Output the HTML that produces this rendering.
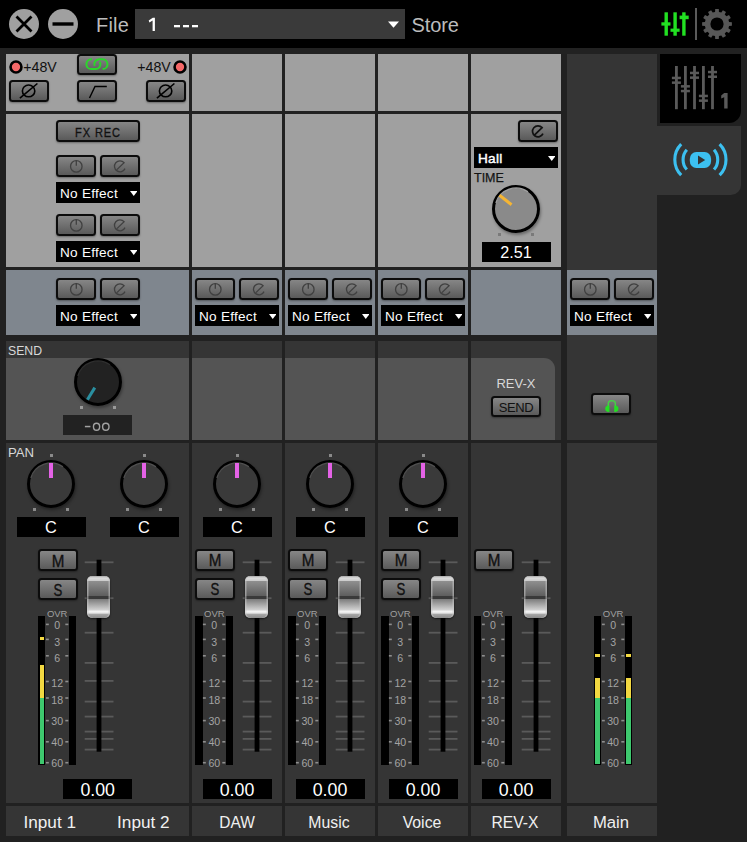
<!DOCTYPE html><html><head><meta charset="utf-8"><style>
html,body{margin:0;padding:0}
body{width:747px;height:842px;position:relative;overflow:hidden;background:#212121;font-family:"Liberation Sans", sans-serif}
.t{position:absolute;line-height:1;white-space:nowrap}
.btn{position:absolute;box-sizing:border-box;border:2px solid #0c0c0c;border-radius:3.5px;background:linear-gradient(#868686,#5a5a5a);box-shadow:0 1px 2px rgba(0,0,0,.35)}
.dd{position:absolute;background:#000}
.ddt{position:absolute;left:4px;top:4.6px;font-size:13.6px;letter-spacing:0.25px;line-height:1;color:#fff;white-space:nowrap}
svg{display:block}
.cap{position:absolute;width:23px;height:42px;border-radius:5px;background:linear-gradient(#a8a8a8 0px,#dcdcdc 2px,#cdcdcd 4.5px,#8e8e8e 5.5px,#5e5e5e 20px,#3a3a3a 20.2px,#3a3a3a 22.6px,#7a7a7a 22.8px,#d2d2d2 34px,#f4f4f4 35.2px,#e6e6e6 37px,#a4a4a4 38.5px,#8a8a8a 42px);box-shadow:inset 1.5px 0 0 rgba(200,200,200,.55),inset -1.5px 0 0 rgba(200,200,200,.55),0 1px 2px rgba(0,0,0,.6)}

</style></head><body>
<div style="position:absolute;left:0px;top:0px;width:747px;height:48px;background:#000;"></div>
<svg width="90" height="48" style="position:absolute;left:0;top:0"><circle cx="24" cy="24" r="15" fill="#a0a0a0"/><path d="M16.5 16.5 L31.5 31.5 M31.5 16.5 L16.5 31.5" stroke="#000" stroke-width="2.8"/><circle cx="63" cy="24" r="15" fill="#a0a0a0"/><rect x="52.5" y="22.3" width="21" height="3.4" fill="#000"/></svg>
<div class="t" style="left:96px;top:15px;font-size:20px;color:#bcbcbc;letter-spacing:0.2px">File</div>
<div style="position:absolute;left:135px;top:9px;width:270px;height:30px;background:#3a3a3a;"></div>
<svg width="747" height="48" style="position:absolute;left:0;top:0"><path d="M154.9 17.8 L154.9 31 L152.6 31 L152.6 20.6 L149.4 22.4 L148.7 20.6 L152.8 17.8 Z" fill="#fff"/></svg>
<svg width="30" height="4" style="position:absolute;left:174px;top:24.8px"><g fill="#fff"><rect x="0" y="0" width="6" height="2.3"/><rect x="9" y="0" width="6" height="2.3"/><rect x="18" y="0" width="6" height="2.3"/></g></svg>
<svg width="12" height="8" style="position:absolute;left:388px;top:21px"><path d="M0 0.5 L11 0.5 L5.5 6.8 Z" fill="#fff"/></svg>
<div class="t" style="left:411.5px;top:14.6px;font-size:20px;color:#bcbcbc;letter-spacing:-0.1px">Store</div>
<svg width="40" height="48" style="position:absolute;left:655px;top:0">
<g fill="#22e022">
<rect x="9.5" y="12.3" width="3.4" height="23.4"/><rect x="6.4" y="22.3" width="9.1" height="3.3"/>
<rect x="18.4" y="12.3" width="3.4" height="23.4"/><rect x="15.5" y="28.6" width="9.1" height="3.2"/>
<rect x="27.2" y="12.3" width="3.4" height="23.4"/><rect x="24.6" y="15.6" width="9.1" height="3.6"/>
</g></svg>
<div style="position:absolute;left:695px;top:8px;width:2px;height:32px;background:#5a5a5a;"></div>
<svg width="747" height="48" style="position:absolute;left:0;top:0"><polygon points="729.04,22.06 731.89,22.20 731.89,25.80 729.04,25.94 728.40,28.34 730.79,29.89 729.00,33.00 726.46,31.71 724.71,33.46 726.00,36.00 722.89,37.79 721.34,35.40 718.94,36.04 718.80,38.89 715.20,38.89 715.06,36.04 712.66,35.40 711.11,37.79 708.00,36.00 709.29,33.46 707.54,31.71 705.00,33.00 703.21,29.89 705.60,28.34 704.96,25.94 702.11,25.80 702.11,22.20 704.96,22.06 705.60,19.66 703.21,18.11 705.00,15.00 707.54,16.29 709.29,14.54 708.00,12.00 711.11,10.21 712.66,12.60 715.06,11.96 715.20,9.11 718.80,9.11 718.94,11.96 721.34,12.60 722.89,10.21 726.00,12.00 724.71,14.54 726.46,16.29 729.00,15.00 730.79,18.11 728.40,19.66" fill="#575757"/><circle cx="717" cy="24" r="6.6" fill="#000"/></svg>
<div style="position:absolute;left:0px;top:48px;width:747px;height:6px;background:#222222;"></div>
<div style="position:absolute;left:660px;top:54px;width:81px;height:69px;background:#000;border-bottom-right-radius:12px"></div>
<div style="position:absolute;left:657px;top:126px;width:84px;height:69px;background:#353535;border-bottom-right-radius:10px"></div>
<svg width="747" height="120" style="position:absolute;left:0;top:0"><g fill="#5a5a5a"><rect x="675.0" y="66" width="2.8" height="43.2"/><rect x="671.9" y="76.7" width="9" height="2.5"/><rect x="671.9" y="81.4" width="9" height="2.5"/><rect x="684.0" y="66" width="2.8" height="43.2"/><rect x="680.9" y="85.1" width="9" height="2.5"/><rect x="680.9" y="89.8" width="9" height="2.5"/><rect x="693.1" y="66" width="2.8" height="43.2"/><rect x="690.0" y="71.7" width="9" height="2.5"/><rect x="690.0" y="76.4" width="9" height="2.5"/><rect x="702.0" y="66" width="2.8" height="43.2"/><rect x="698.9" y="94.7" width="9" height="2.5"/><rect x="698.9" y="99.4" width="9" height="2.5"/><rect x="711.1" y="66" width="2.8" height="43.2"/><rect x="708.0" y="70.8" width="9" height="2.5"/><rect x="708.0" y="75.5" width="9" height="2.5"/></g></svg><svg width="12" height="20" style="position:absolute;left:718px;top:90px"><path d="M6.2 3 L9.6 3 L9.6 18.5 L6.2 18.5 L6.2 7.2 L3.2 8.6 L3.2 5.6 Z" fill="#5a5a5a"/></svg>
<svg width="747" height="200" style="position:absolute;left:0;top:0">
<g fill="none" stroke="#3cc0f0" stroke-width="3.1" stroke-linecap="butt">
<path d="M681.2 144.2 A22 22 0 0 0 681.2 175.2"/>
<path d="M686.8 149.8 A15 15 0 0 0 686.8 169.6"/>
<path d="M719.6 144.2 A22 22 0 0 1 719.6 175.2"/>
<path d="M714 149.8 A15 15 0 0 1 714 169.6"/>
</g>
<rect x="689.8" y="151.9" width="21.3" height="16.1" rx="6.5" ry="7" fill="#3cc0f0"/>
<path d="M698 155.6 L705.2 160 L698 164.5 Z" fill="#333"/>
</svg>
<div style="position:absolute;left:6px;top:54px;width:183px;height:57px;background:#a0a0a0;"></div>
<div style="position:absolute;left:6px;top:114px;width:183px;height:153px;background:#a0a0a0;"></div>
<div style="position:absolute;left:6px;top:270px;width:183px;height:65px;background:#7f868e;"></div>
<div style="position:absolute;left:6px;top:341px;width:183px;height:17px;background:#353535;"></div>
<div style="position:absolute;left:6px;top:443px;width:183px;height:360px;background:#353535;"></div>
<div style="position:absolute;left:6px;top:806px;width:183px;height:30px;background:#353535;"></div>
<div style="position:absolute;left:192px;top:54px;width:90px;height:57px;background:#a0a0a0;"></div>
<div style="position:absolute;left:192px;top:114px;width:90px;height:153px;background:#a0a0a0;"></div>
<div style="position:absolute;left:192px;top:270px;width:90px;height:65px;background:#7f868e;"></div>
<div style="position:absolute;left:192px;top:341px;width:90px;height:17px;background:#353535;"></div>
<div style="position:absolute;left:192px;top:443px;width:90px;height:360px;background:#353535;"></div>
<div style="position:absolute;left:192px;top:806px;width:90px;height:30px;background:#353535;"></div>
<div style="position:absolute;left:285px;top:54px;width:90px;height:57px;background:#a0a0a0;"></div>
<div style="position:absolute;left:285px;top:114px;width:90px;height:153px;background:#a0a0a0;"></div>
<div style="position:absolute;left:285px;top:270px;width:90px;height:65px;background:#7f868e;"></div>
<div style="position:absolute;left:285px;top:341px;width:90px;height:17px;background:#353535;"></div>
<div style="position:absolute;left:285px;top:443px;width:90px;height:360px;background:#353535;"></div>
<div style="position:absolute;left:285px;top:806px;width:90px;height:30px;background:#353535;"></div>
<div style="position:absolute;left:378px;top:54px;width:90px;height:57px;background:#a0a0a0;"></div>
<div style="position:absolute;left:378px;top:114px;width:90px;height:153px;background:#a0a0a0;"></div>
<div style="position:absolute;left:378px;top:270px;width:90px;height:65px;background:#7f868e;"></div>
<div style="position:absolute;left:378px;top:341px;width:90px;height:17px;background:#353535;"></div>
<div style="position:absolute;left:378px;top:443px;width:90px;height:360px;background:#353535;"></div>
<div style="position:absolute;left:378px;top:806px;width:90px;height:30px;background:#353535;"></div>
<div style="position:absolute;left:471px;top:54px;width:90px;height:57px;background:#a0a0a0;"></div>
<div style="position:absolute;left:471px;top:114px;width:90px;height:153px;background:#a0a0a0;"></div>
<div style="position:absolute;left:471px;top:270px;width:90px;height:65px;background:#7f868e;"></div>
<div style="position:absolute;left:471px;top:341px;width:90px;height:17px;background:#353535;"></div>
<div style="position:absolute;left:471px;top:443px;width:90px;height:360px;background:#353535;"></div>
<div style="position:absolute;left:471px;top:806px;width:90px;height:30px;background:#353535;"></div>
<div style="position:absolute;left:6px;top:358px;width:183px;height:82px;background:#545454;"></div>
<div style="position:absolute;left:192px;top:358px;width:90px;height:82px;background:#545454;"></div>
<div style="position:absolute;left:285px;top:358px;width:90px;height:82px;background:#545454;"></div>
<div style="position:absolute;left:378px;top:358px;width:90px;height:82px;background:#545454;"></div>
<div style="position:absolute;left:471px;top:358px;width:90px;height:82px;background:#353535;"></div>
<div style="position:absolute;left:471px;top:358px;width:84px;height:82px;background:#545454;border-top-right-radius:11px"></div>
<div style="position:absolute;left:555px;top:358px;width:6px;height:82px;background:#353535;"></div>
<div style="position:absolute;left:567px;top:54px;width:90px;height:216px;background:#353535;"></div>
<div style="position:absolute;left:567px;top:270px;width:90px;height:65px;background:#7f868e;"></div>
<div style="position:absolute;left:567px;top:335px;width:90px;height:105px;background:#353535;"></div>
<div style="position:absolute;left:567px;top:443px;width:90px;height:360px;background:#353535;"></div>
<div style="position:absolute;left:567px;top:806px;width:90px;height:30px;background:#353535;"></div>
<svg width="16" height="16" style="position:absolute;left:8px;top:59px"><circle cx="8" cy="8" r="5.45" fill="#f46868" stroke="#000" stroke-width="2.6"/></svg>
<div class="t" style="left:23.3px;top:59.7px;font-size:14.2px;color:#111;">+48V</div>
<svg width="16" height="16" style="position:absolute;left:171.5px;top:59px"><circle cx="8" cy="8" r="5.45" fill="#f46868" stroke="#000" stroke-width="2.6"/></svg>
<div class="t" style="left:137.3px;top:59.7px;font-size:14.2px;color:#111;">+48V</div>
<div class="btn" style="left:77px;top:54px;width:40px;height:21px"><svg width="40" height="21" style="position:absolute;left:-2px;top:-2px"><g fill="none" stroke="#2ad82a" stroke-width="2" transform="translate(-77,-54)"><path d="M92 59.3 L91.3 59.3 A4.9 4.9 0 0 0 91.3 69.1 L95.6 69.1 A4.9 4.9 0 0 0 99.8 61.7"/><path d="M94.6 66 A4.9 4.9 0 0 1 99.2 59.3 L102.6 59.3 A4.9 4.9 0 0 1 102.6 69.1"/></g></svg></div>
<div class="btn" style="left:9px;top:80px;width:40px;height:22px"><svg width="40" height="22" style="position:absolute;left:-2px;top:-2px"><ellipse cx="19.6" cy="10.9" rx="6.2" ry="5.9" fill="none" stroke="#000" stroke-width="1.6"/><line x1="10.9" y1="18.2" x2="28.4" y2="3.5" stroke="#000" stroke-width="1.6"/></svg></div>
<div class="btn" style="left:146px;top:80px;width:40px;height:22px"><svg width="40" height="22" style="position:absolute;left:-2px;top:-2px"><ellipse cx="19.6" cy="10.9" rx="6.2" ry="5.9" fill="none" stroke="#000" stroke-width="1.6"/><line x1="10.9" y1="18.2" x2="28.4" y2="3.5" stroke="#000" stroke-width="1.6"/></svg></div>
<div class="btn" style="left:77px;top:80px;width:40px;height:22px"><svg width="40" height="22" style="position:absolute;left:-2px;top:-2px"><path d="M12.5 18 L18 6.5 L29.8 6.5" fill="none" stroke="#000" stroke-width="1.4"/></svg></div>
<div class="btn" style="left:56px;top:120px;width:84px;height:22px"><div class="t" style="left:0;top:4.6px;width:80px;text-align:center;font-size:12.8px;color:#111;letter-spacing:1.1px;transform:scaleX(0.86);-webkit-text-stroke:0.3px #111">FX REC</div></div>
<div class="btn" style="left:56px;top:155px;width:40px;height:22px"><svg width="40" height="22" viewBox="0 0 40 22" style="position:absolute;left:-2px;top:-2px"><circle cx="20.3" cy="11.4" r="5.75" fill="none" stroke="#404040" stroke-width="1.3"/><line x1="20.3" y1="5.4" x2="20.3" y2="10.7" stroke="#404040" stroke-width="1.3"/></svg></div>
<div class="btn" style="left:100px;top:155px;width:40px;height:22px"><svg width="40" height="22" viewBox="0 0 40 22" style="position:absolute;left:-2px;top:-2px"><path d="M16.9 14.6 L24.09 7.62 A5.5 5.5 0 1 0 24.98 13.62" fill="none" stroke="#404040" stroke-width="1.3"/></svg></div>
<div class="dd" style="left:56px;top:182px;width:84px;height:21px"><span class="ddt">No Effect</span><svg width="7.5" height="6" style="position:absolute;right:3px;top:9.2px"><path d="M0 0 L7.5 0 L3.75 5 Z" fill="#fff"/></svg></div>
<div class="btn" style="left:56px;top:214px;width:40px;height:22px"><svg width="40" height="22" viewBox="0 0 40 22" style="position:absolute;left:-2px;top:-2px"><circle cx="20.3" cy="11.4" r="5.75" fill="none" stroke="#404040" stroke-width="1.3"/><line x1="20.3" y1="5.4" x2="20.3" y2="10.7" stroke="#404040" stroke-width="1.3"/></svg></div>
<div class="btn" style="left:100px;top:214px;width:40px;height:22px"><svg width="40" height="22" viewBox="0 0 40 22" style="position:absolute;left:-2px;top:-2px"><path d="M16.9 14.6 L24.09 7.62 A5.5 5.5 0 1 0 24.98 13.62" fill="none" stroke="#404040" stroke-width="1.3"/></svg></div>
<div class="dd" style="left:56px;top:241px;width:84px;height:21px"><span class="ddt">No Effect</span><svg width="7.5" height="6" style="position:absolute;right:3px;top:9.2px"><path d="M0 0 L7.5 0 L3.75 5 Z" fill="#fff"/></svg></div>
<div class="btn" style="left:518px;top:120px;width:40px;height:22px"><svg width="40" height="22" viewBox="0 0 40 22" style="position:absolute;left:-2px;top:-2px"><path d="M16.9 14.6 L24.09 7.62 A5.5 5.5 0 1 0 24.98 13.62" fill="none" stroke="#111" stroke-width="1.7"/></svg></div>
<div class="dd" style="left:474px;top:147px;width:84px;height:21px"><span class="ddt"><span style="-webkit-text-stroke:0.45px #fff;letter-spacing:0.3px">Hall</span></span><svg width="7.5" height="6" style="position:absolute;right:3px;top:9.2px"><path d="M0 0 L7.5 0 L3.75 5 Z" fill="#fff"/></svg></div>
<div class="t" style="left:474px;top:172px;font-size:12.5px;color:#141414;-webkit-text-stroke:0.25px #141414">TIME</div>
<div style="position:absolute;left:492px;top:185px;width:48px;height:48px;border-radius:50%;box-shadow:1px 2px 3px rgba(0,0,0,.35)"></div>
<svg width="60" height="60" style="position:absolute;left:486px;top:179px"><circle cx="30" cy="30" r="22.5" fill="#8a8a8a" stroke="#000" stroke-width="3"/><path d="M9.8 24 A21 21 0 0 1 42 12.8" fill="none" stroke="#a8a8a8" stroke-width="1.2" opacity="0.9"/><line x1="13.5" y1="16.3" x2="25.5" y2="25.7" stroke="#f5b533" stroke-width="3"/></svg>
<div style="position:absolute;left:498px;top:233px;width:3px;height:3px;background:#7a7a7a"></div>
<div style="position:absolute;left:531px;top:233px;width:3px;height:3px;background:#7a7a7a"></div>
<div style="position:absolute;left:482px;top:242px;width:69px;height:20px;background:#000;"></div>
<div class="t" style="left:466.0px;top:244.3px;width:100px;text-align:center;font-size:16.2px;color:#fff;">2.51</div>
<div class="btn" style="left:56px;top:278px;width:40px;height:22px"><svg width="40" height="22" viewBox="0 0 40 22" style="position:absolute;left:-2px;top:-2px"><circle cx="20.3" cy="11.4" r="5.75" fill="none" stroke="#404040" stroke-width="1.3"/><line x1="20.3" y1="5.4" x2="20.3" y2="10.7" stroke="#404040" stroke-width="1.3"/></svg></div>
<div class="btn" style="left:100px;top:278px;width:40px;height:22px"><svg width="40" height="22" viewBox="0 0 40 22" style="position:absolute;left:-2px;top:-2px"><path d="M16.9 14.6 L24.09 7.62 A5.5 5.5 0 1 0 24.98 13.62" fill="none" stroke="#404040" stroke-width="1.3"/></svg></div>
<div class="dd" style="left:56px;top:305px;width:84px;height:21px"><span class="ddt">No Effect</span><svg width="7.5" height="6" style="position:absolute;right:3px;top:9.2px"><path d="M0 0 L7.5 0 L3.75 5 Z" fill="#fff"/></svg></div>
<div class="btn" style="left:195px;top:278px;width:40px;height:22px"><svg width="40" height="22" viewBox="0 0 40 22" style="position:absolute;left:-2px;top:-2px"><circle cx="20.3" cy="11.4" r="5.75" fill="none" stroke="#404040" stroke-width="1.3"/><line x1="20.3" y1="5.4" x2="20.3" y2="10.7" stroke="#404040" stroke-width="1.3"/></svg></div>
<div class="btn" style="left:239px;top:278px;width:40px;height:22px"><svg width="40" height="22" viewBox="0 0 40 22" style="position:absolute;left:-2px;top:-2px"><path d="M16.9 14.6 L24.09 7.62 A5.5 5.5 0 1 0 24.98 13.62" fill="none" stroke="#404040" stroke-width="1.3"/></svg></div>
<div class="dd" style="left:195px;top:305px;width:84px;height:21px"><span class="ddt">No Effect</span><svg width="7.5" height="6" style="position:absolute;right:3px;top:9.2px"><path d="M0 0 L7.5 0 L3.75 5 Z" fill="#fff"/></svg></div>
<div class="btn" style="left:288px;top:278px;width:40px;height:22px"><svg width="40" height="22" viewBox="0 0 40 22" style="position:absolute;left:-2px;top:-2px"><circle cx="20.3" cy="11.4" r="5.75" fill="none" stroke="#404040" stroke-width="1.3"/><line x1="20.3" y1="5.4" x2="20.3" y2="10.7" stroke="#404040" stroke-width="1.3"/></svg></div>
<div class="btn" style="left:332px;top:278px;width:40px;height:22px"><svg width="40" height="22" viewBox="0 0 40 22" style="position:absolute;left:-2px;top:-2px"><path d="M16.9 14.6 L24.09 7.62 A5.5 5.5 0 1 0 24.98 13.62" fill="none" stroke="#404040" stroke-width="1.3"/></svg></div>
<div class="dd" style="left:288px;top:305px;width:84px;height:21px"><span class="ddt">No Effect</span><svg width="7.5" height="6" style="position:absolute;right:3px;top:9.2px"><path d="M0 0 L7.5 0 L3.75 5 Z" fill="#fff"/></svg></div>
<div class="btn" style="left:381px;top:278px;width:40px;height:22px"><svg width="40" height="22" viewBox="0 0 40 22" style="position:absolute;left:-2px;top:-2px"><circle cx="20.3" cy="11.4" r="5.75" fill="none" stroke="#404040" stroke-width="1.3"/><line x1="20.3" y1="5.4" x2="20.3" y2="10.7" stroke="#404040" stroke-width="1.3"/></svg></div>
<div class="btn" style="left:425px;top:278px;width:40px;height:22px"><svg width="40" height="22" viewBox="0 0 40 22" style="position:absolute;left:-2px;top:-2px"><path d="M16.9 14.6 L24.09 7.62 A5.5 5.5 0 1 0 24.98 13.62" fill="none" stroke="#404040" stroke-width="1.3"/></svg></div>
<div class="dd" style="left:381px;top:305px;width:84px;height:21px"><span class="ddt">No Effect</span><svg width="7.5" height="6" style="position:absolute;right:3px;top:9.2px"><path d="M0 0 L7.5 0 L3.75 5 Z" fill="#fff"/></svg></div>
<div class="btn" style="left:570px;top:278px;width:40px;height:22px"><svg width="40" height="22" viewBox="0 0 40 22" style="position:absolute;left:-2px;top:-2px"><circle cx="20.3" cy="11.4" r="5.75" fill="none" stroke="#404040" stroke-width="1.3"/><line x1="20.3" y1="5.4" x2="20.3" y2="10.7" stroke="#404040" stroke-width="1.3"/></svg></div>
<div class="btn" style="left:614px;top:278px;width:40px;height:22px"><svg width="40" height="22" viewBox="0 0 40 22" style="position:absolute;left:-2px;top:-2px"><path d="M16.9 14.6 L24.09 7.62 A5.5 5.5 0 1 0 24.98 13.62" fill="none" stroke="#404040" stroke-width="1.3"/></svg></div>
<div class="dd" style="left:570px;top:305px;width:84px;height:21px"><span class="ddt">No Effect</span><svg width="7.5" height="6" style="position:absolute;right:3px;top:9.2px"><path d="M0 0 L7.5 0 L3.75 5 Z" fill="#fff"/></svg></div>
<div class="t" style="left:8px;top:344.2px;font-size:13.2px;color:#d8d8d8;transform:scaleX(0.93);transform-origin:0 0">SEND</div>
<div style="position:absolute;left:74px;top:358px;width:48px;height:48px;border-radius:50%;box-shadow:1px 2px 3px rgba(0,0,0,.35)"></div>
<svg width="60" height="60" style="position:absolute;left:68px;top:352px"><circle cx="30" cy="30" r="22.5" fill="#222" stroke="#000" stroke-width="3"/><path d="M9.8 24 A21 21 0 0 1 42 12.8" fill="none" stroke="#333" stroke-width="1.2" opacity="0.9"/><line x1="19.4" y1="47.8" x2="26.8" y2="35.6" stroke="#2a8fa0" stroke-width="3"/></svg>
<div style="position:absolute;left:80px;top:406px;width:3px;height:3px;background:#9a9a9a"></div>
<div style="position:absolute;left:113px;top:406px;width:3px;height:3px;background:#9a9a9a"></div>
<div style="position:absolute;left:63px;top:415px;width:69px;height:20px;background:#222;"></div>
<svg width="30" height="12" style="position:absolute;left:84px;top:422px"><rect x="0.9" y="3.8" width="5.5" height="1.5" fill="#a2a2a2"/><ellipse cx="12.55" cy="4.7" rx="3.1" ry="3.5" fill="none" stroke="#a2a2a2" stroke-width="1.4"/><ellipse cx="21.8" cy="4.7" rx="3.2" ry="3.5" fill="none" stroke="#a2a2a2" stroke-width="1.4"/></svg>
<div class="t" style="left:466.0px;top:377px;width:100px;text-align:center;font-size:13px;color:#d8d8d8;">REV-X</div>
<div class="btn" style="left:491px;top:396px;width:50px;height:21px"><div class="t" style="left:0;top:3px;width:46px;text-align:center;font-size:13px;color:#111;letter-spacing:-0.4px">SEND</div></div>
<div class="btn" style="left:591px;top:393px;width:40px;height:22px"><svg width="40" height="22" style="position:absolute;left:-2px;top:-2px"><path d="M17.3 18.5 L17.3 10.6 A3 3 0 0 1 20.3 7.65 L21.35 7.65 A3 3 0 0 1 24.35 10.6 L24.35 18.5" fill="none" stroke="#48cc48" stroke-width="1.5"/><path d="M18.4 12.6 A4.2 3.2 0 0 0 18.4 19 Z" fill="#22e022"/><path d="M23.3 12.6 A4.2 3.2 0 0 1 23.3 19 Z" fill="#22e022"/></svg></div>
<div class="t" style="left:8px;top:446.4px;font-size:13.2px;color:#d8d8d8;">PAN</div>
<div style="position:absolute;left:27px;top:460px;width:48px;height:48px;border-radius:50%;box-shadow:1px 2px 3px rgba(0,0,0,.35)"></div>
<svg width="60" height="60" style="position:absolute;left:21px;top:454px"><circle cx="30" cy="30" r="22.5" fill="#3a3a3a" stroke="#000" stroke-width="3"/><path d="M9.8 24 A21 21 0 0 1 42 12.8" fill="none" stroke="#555" stroke-width="1.2" opacity="0.9"/><rect x="28" y="9" width="4" height="15" fill="#e462e6"/></svg>
<div style="position:absolute;left:33px;top:508px;width:3px;height:3px;background:#8a8a8a"></div>
<div style="position:absolute;left:66px;top:508px;width:3px;height:3px;background:#8a8a8a"></div>
<div style="position:absolute;left:49.5px;top:454px;width:3px;height:3px;background:#8a8a8a"></div>
<div style="position:absolute;left:17px;top:517px;width:69px;height:20px;background:#000;"></div>
<div class="t" style="left:1.0px;top:518.8px;width:100px;text-align:center;font-size:17.2px;color:#fff;transform:scaleX(0.95)">C</div>
<div style="position:absolute;left:120px;top:460px;width:48px;height:48px;border-radius:50%;box-shadow:1px 2px 3px rgba(0,0,0,.35)"></div>
<svg width="60" height="60" style="position:absolute;left:114px;top:454px"><circle cx="30" cy="30" r="22.5" fill="#3a3a3a" stroke="#000" stroke-width="3"/><path d="M9.8 24 A21 21 0 0 1 42 12.8" fill="none" stroke="#555" stroke-width="1.2" opacity="0.9"/><rect x="28" y="9" width="4" height="15" fill="#e462e6"/></svg>
<div style="position:absolute;left:126px;top:508px;width:3px;height:3px;background:#8a8a8a"></div>
<div style="position:absolute;left:159px;top:508px;width:3px;height:3px;background:#8a8a8a"></div>
<div style="position:absolute;left:142.5px;top:454px;width:3px;height:3px;background:#8a8a8a"></div>
<div style="position:absolute;left:110px;top:517px;width:69px;height:20px;background:#000;"></div>
<div class="t" style="left:94.0px;top:518.8px;width:100px;text-align:center;font-size:17.2px;color:#fff;transform:scaleX(0.95)">C</div>
<div style="position:absolute;left:213px;top:460px;width:48px;height:48px;border-radius:50%;box-shadow:1px 2px 3px rgba(0,0,0,.35)"></div>
<svg width="60" height="60" style="position:absolute;left:207px;top:454px"><circle cx="30" cy="30" r="22.5" fill="#3a3a3a" stroke="#000" stroke-width="3"/><path d="M9.8 24 A21 21 0 0 1 42 12.8" fill="none" stroke="#555" stroke-width="1.2" opacity="0.9"/><rect x="28" y="9" width="4" height="15" fill="#e462e6"/></svg>
<div style="position:absolute;left:219px;top:508px;width:3px;height:3px;background:#8a8a8a"></div>
<div style="position:absolute;left:252px;top:508px;width:3px;height:3px;background:#8a8a8a"></div>
<div style="position:absolute;left:235.5px;top:454px;width:3px;height:3px;background:#8a8a8a"></div>
<div style="position:absolute;left:203px;top:517px;width:69px;height:20px;background:#000;"></div>
<div class="t" style="left:187.0px;top:518.8px;width:100px;text-align:center;font-size:17.2px;color:#fff;transform:scaleX(0.95)">C</div>
<div style="position:absolute;left:306px;top:460px;width:48px;height:48px;border-radius:50%;box-shadow:1px 2px 3px rgba(0,0,0,.35)"></div>
<svg width="60" height="60" style="position:absolute;left:300px;top:454px"><circle cx="30" cy="30" r="22.5" fill="#3a3a3a" stroke="#000" stroke-width="3"/><path d="M9.8 24 A21 21 0 0 1 42 12.8" fill="none" stroke="#555" stroke-width="1.2" opacity="0.9"/><rect x="28" y="9" width="4" height="15" fill="#e462e6"/></svg>
<div style="position:absolute;left:312px;top:508px;width:3px;height:3px;background:#8a8a8a"></div>
<div style="position:absolute;left:345px;top:508px;width:3px;height:3px;background:#8a8a8a"></div>
<div style="position:absolute;left:328.5px;top:454px;width:3px;height:3px;background:#8a8a8a"></div>
<div style="position:absolute;left:296px;top:517px;width:69px;height:20px;background:#000;"></div>
<div class="t" style="left:280.0px;top:518.8px;width:100px;text-align:center;font-size:17.2px;color:#fff;transform:scaleX(0.95)">C</div>
<div style="position:absolute;left:399px;top:460px;width:48px;height:48px;border-radius:50%;box-shadow:1px 2px 3px rgba(0,0,0,.35)"></div>
<svg width="60" height="60" style="position:absolute;left:393px;top:454px"><circle cx="30" cy="30" r="22.5" fill="#3a3a3a" stroke="#000" stroke-width="3"/><path d="M9.8 24 A21 21 0 0 1 42 12.8" fill="none" stroke="#555" stroke-width="1.2" opacity="0.9"/><rect x="28" y="9" width="4" height="15" fill="#e462e6"/></svg>
<div style="position:absolute;left:405px;top:508px;width:3px;height:3px;background:#8a8a8a"></div>
<div style="position:absolute;left:438px;top:508px;width:3px;height:3px;background:#8a8a8a"></div>
<div style="position:absolute;left:421.5px;top:454px;width:3px;height:3px;background:#8a8a8a"></div>
<div style="position:absolute;left:389px;top:517px;width:69px;height:20px;background:#000;"></div>
<div class="t" style="left:373.0px;top:518.8px;width:100px;text-align:center;font-size:17.2px;color:#fff;transform:scaleX(0.95)">C</div>
<div class="btn" style="left:38px;top:549px;width:40px;height:22px"><div class="t" style="left:0;top:1.6px;width:36px;text-align:center;font-size:16.5px;color:#111;-webkit-text-stroke:0.35px #111;transform:scaleX(0.92)">M</div></div>
<div class="btn" style="left:38px;top:578px;width:40px;height:22px"><div class="t" style="left:0;top:1.6px;width:36px;text-align:center;font-size:16.5px;color:#111;-webkit-text-stroke:0.35px #111;transform:scaleX(0.8)">S</div></div>
<div class="t" style="left:7.200000000000003px;top:609px;width:100px;text-align:center;font-size:9.5px;color:#a0a0a0;">OVR</div>
<div style="position:absolute;left:38.2px;top:616px;width:7.3px;height:149px;background:#000;"></div>
<div style="position:absolute;left:68.7px;top:616px;width:7.3px;height:149px;background:#000;"></div>
<svg width="40" height="160" style="position:absolute;left:37.2px;top:610px"><g fill="#8e8e8e"><rect x="8.9" y="13.6" width="2.9" height="1.6"/><rect x="28.3" y="13.6" width="3" height="1.6"/><rect x="8.9" y="28.6" width="2.9" height="1.6"/><rect x="28.3" y="28.6" width="3" height="1.6"/><rect x="8.9" y="45.0" width="2.9" height="1.6"/><rect x="28.3" y="45.0" width="3" height="1.6"/><rect x="8.9" y="70.7" width="2.9" height="1.6"/><rect x="28.3" y="70.7" width="3" height="1.6"/><rect x="8.9" y="87.2" width="2.9" height="1.6"/><rect x="28.3" y="87.2" width="3" height="1.6"/><rect x="8.9" y="109.8" width="2.9" height="1.6"/><rect x="28.3" y="109.8" width="3" height="1.6"/><rect x="8.9" y="131.0" width="2.9" height="1.6"/><rect x="28.3" y="131.0" width="3" height="1.6"/><rect x="8.9" y="151.9" width="2.9" height="1.6"/><rect x="28.3" y="151.9" width="3" height="1.6"/></g></svg>
<div class="t" style="left:42.2px;top:620.3000000000001px;width:30px;text-align:center;font-size:10.6px;color:#a4a4a4;">0</div>
<div class="t" style="left:42.2px;top:636.6px;width:30px;text-align:center;font-size:10.6px;color:#a4a4a4;">3</div>
<div class="t" style="left:42.2px;top:653.0px;width:30px;text-align:center;font-size:10.6px;color:#a4a4a4;">6</div>
<div class="t" style="left:42.2px;top:678.2px;width:30px;text-align:center;font-size:10.6px;color:#a4a4a4;">12</div>
<div class="t" style="left:42.2px;top:695.2px;width:30px;text-align:center;font-size:10.6px;color:#a4a4a4;">18</div>
<div class="t" style="left:42.2px;top:716.3000000000001px;width:30px;text-align:center;font-size:10.6px;color:#a4a4a4;">30</div>
<div class="t" style="left:42.2px;top:737.2px;width:30px;text-align:center;font-size:10.6px;color:#a4a4a4;">40</div>
<div class="t" style="left:42.2px;top:758.1px;width:30px;text-align:center;font-size:10.6px;color:#a4a4a4;">60</div>
<div style="position:absolute;left:39.5px;top:637px;width:4.9px;height:3px;background:#f2d841;"></div>
<div style="position:absolute;left:39.5px;top:665px;width:4.9px;height:32.60000000000002px;background:#f2d841;"></div>
<div style="position:absolute;left:39.5px;top:697.6px;width:4.9px;height:66.39999999999998px;background:#3ec86e;"></div>
<svg width="40" height="200" style="position:absolute;left:78.5px;top:555px"><g fill="#5a5a5a"><rect x="5.7" y="6.4" width="28.8" height="1.8"/><rect x="5.7" y="42.3" width="28.8" height="1.8"/><rect x="5.7" y="76.8" width="28.8" height="1.8"/><rect x="5.7" y="107.0" width="28.8" height="1.8"/><rect x="5.7" y="125.0" width="28.8" height="1.8"/><rect x="5.7" y="145.7" width="28.8" height="1.8"/><rect x="5.7" y="160.7" width="28.8" height="1.8"/><rect x="5.7" y="175.7" width="28.8" height="1.8"/><rect x="5.7" y="183.0" width="28.8" height="1.8"/><rect x="5.7" y="193.7" width="28.8" height="1.8"/></g><rect x="17.6" y="4.7" width="4.8" height="192" fill="#000"/></svg>
<div class="cap" style="left:87.0px;top:576px"></div>
<div style="position:absolute;left:63.2px;top:779px;width:69px;height:20px;background:#000;"></div>
<div class="t" style="left:47.7px;top:781.7px;width:100px;text-align:center;font-size:17.8px;color:#fff;">0.00</div>
<div class="btn" style="left:195px;top:548.5px;width:40px;height:22px"><div class="t" style="left:0;top:1.6px;width:36px;text-align:center;font-size:16.5px;color:#111;-webkit-text-stroke:0.35px #111;transform:scaleX(0.92)">M</div></div>
<div class="btn" style="left:195px;top:577.5px;width:40px;height:22px"><div class="t" style="left:0;top:1.6px;width:36px;text-align:center;font-size:16.5px;color:#111;-webkit-text-stroke:0.35px #111;transform:scaleX(0.8)">S</div></div>
<div class="t" style="left:164.3px;top:609px;width:100px;text-align:center;font-size:9.5px;color:#a0a0a0;">OVR</div>
<div style="position:absolute;left:195.3px;top:616px;width:7.3px;height:149px;background:#000;"></div>
<div style="position:absolute;left:225.8px;top:616px;width:7.3px;height:149px;background:#000;"></div>
<svg width="40" height="160" style="position:absolute;left:194.3px;top:610px"><g fill="#8e8e8e"><rect x="8.9" y="13.6" width="2.9" height="1.6"/><rect x="28.3" y="13.6" width="3" height="1.6"/><rect x="8.9" y="28.6" width="2.9" height="1.6"/><rect x="28.3" y="28.6" width="3" height="1.6"/><rect x="8.9" y="45.0" width="2.9" height="1.6"/><rect x="28.3" y="45.0" width="3" height="1.6"/><rect x="8.9" y="70.7" width="2.9" height="1.6"/><rect x="28.3" y="70.7" width="3" height="1.6"/><rect x="8.9" y="87.2" width="2.9" height="1.6"/><rect x="28.3" y="87.2" width="3" height="1.6"/><rect x="8.9" y="109.8" width="2.9" height="1.6"/><rect x="28.3" y="109.8" width="3" height="1.6"/><rect x="8.9" y="131.0" width="2.9" height="1.6"/><rect x="28.3" y="131.0" width="3" height="1.6"/><rect x="8.9" y="151.9" width="2.9" height="1.6"/><rect x="28.3" y="151.9" width="3" height="1.6"/></g></svg>
<div class="t" style="left:199.3px;top:620.3000000000001px;width:30px;text-align:center;font-size:10.6px;color:#a4a4a4;">0</div>
<div class="t" style="left:199.3px;top:636.6px;width:30px;text-align:center;font-size:10.6px;color:#a4a4a4;">3</div>
<div class="t" style="left:199.3px;top:653.0px;width:30px;text-align:center;font-size:10.6px;color:#a4a4a4;">6</div>
<div class="t" style="left:199.3px;top:678.2px;width:30px;text-align:center;font-size:10.6px;color:#a4a4a4;">12</div>
<div class="t" style="left:199.3px;top:695.2px;width:30px;text-align:center;font-size:10.6px;color:#a4a4a4;">18</div>
<div class="t" style="left:199.3px;top:716.3000000000001px;width:30px;text-align:center;font-size:10.6px;color:#a4a4a4;">30</div>
<div class="t" style="left:199.3px;top:737.2px;width:30px;text-align:center;font-size:10.6px;color:#a4a4a4;">40</div>
<div class="t" style="left:199.3px;top:758.1px;width:30px;text-align:center;font-size:10.6px;color:#a4a4a4;">60</div>
<svg width="40" height="200" style="position:absolute;left:236.5px;top:555px"><g fill="#5a5a5a"><rect x="5.7" y="6.4" width="28.8" height="1.8"/><rect x="5.7" y="42.3" width="28.8" height="1.8"/><rect x="5.7" y="76.8" width="28.8" height="1.8"/><rect x="5.7" y="107.0" width="28.8" height="1.8"/><rect x="5.7" y="125.0" width="28.8" height="1.8"/><rect x="5.7" y="145.7" width="28.8" height="1.8"/><rect x="5.7" y="160.7" width="28.8" height="1.8"/><rect x="5.7" y="175.7" width="28.8" height="1.8"/><rect x="5.7" y="183.0" width="28.8" height="1.8"/><rect x="5.7" y="193.7" width="28.8" height="1.8"/></g><rect x="17.6" y="4.7" width="4.8" height="192" fill="#000"/></svg>
<div class="cap" style="left:245.0px;top:576px"></div>
<div style="position:absolute;left:202.5px;top:779px;width:69px;height:20px;background:#000;"></div>
<div class="t" style="left:187.0px;top:781.7px;width:100px;text-align:center;font-size:17.8px;color:#fff;">0.00</div>
<div class="btn" style="left:288px;top:548.5px;width:40px;height:22px"><div class="t" style="left:0;top:1.6px;width:36px;text-align:center;font-size:16.5px;color:#111;-webkit-text-stroke:0.35px #111;transform:scaleX(0.92)">M</div></div>
<div class="btn" style="left:288px;top:577.5px;width:40px;height:22px"><div class="t" style="left:0;top:1.6px;width:36px;text-align:center;font-size:16.5px;color:#111;-webkit-text-stroke:0.35px #111;transform:scaleX(0.8)">S</div></div>
<div class="t" style="left:257.3px;top:609px;width:100px;text-align:center;font-size:9.5px;color:#a0a0a0;">OVR</div>
<div style="position:absolute;left:288.3px;top:616px;width:7.3px;height:149px;background:#000;"></div>
<div style="position:absolute;left:318.8px;top:616px;width:7.3px;height:149px;background:#000;"></div>
<svg width="40" height="160" style="position:absolute;left:287.3px;top:610px"><g fill="#8e8e8e"><rect x="8.9" y="13.6" width="2.9" height="1.6"/><rect x="28.3" y="13.6" width="3" height="1.6"/><rect x="8.9" y="28.6" width="2.9" height="1.6"/><rect x="28.3" y="28.6" width="3" height="1.6"/><rect x="8.9" y="45.0" width="2.9" height="1.6"/><rect x="28.3" y="45.0" width="3" height="1.6"/><rect x="8.9" y="70.7" width="2.9" height="1.6"/><rect x="28.3" y="70.7" width="3" height="1.6"/><rect x="8.9" y="87.2" width="2.9" height="1.6"/><rect x="28.3" y="87.2" width="3" height="1.6"/><rect x="8.9" y="109.8" width="2.9" height="1.6"/><rect x="28.3" y="109.8" width="3" height="1.6"/><rect x="8.9" y="131.0" width="2.9" height="1.6"/><rect x="28.3" y="131.0" width="3" height="1.6"/><rect x="8.9" y="151.9" width="2.9" height="1.6"/><rect x="28.3" y="151.9" width="3" height="1.6"/></g></svg>
<div class="t" style="left:292.3px;top:620.3000000000001px;width:30px;text-align:center;font-size:10.6px;color:#a4a4a4;">0</div>
<div class="t" style="left:292.3px;top:636.6px;width:30px;text-align:center;font-size:10.6px;color:#a4a4a4;">3</div>
<div class="t" style="left:292.3px;top:653.0px;width:30px;text-align:center;font-size:10.6px;color:#a4a4a4;">6</div>
<div class="t" style="left:292.3px;top:678.2px;width:30px;text-align:center;font-size:10.6px;color:#a4a4a4;">12</div>
<div class="t" style="left:292.3px;top:695.2px;width:30px;text-align:center;font-size:10.6px;color:#a4a4a4;">18</div>
<div class="t" style="left:292.3px;top:716.3000000000001px;width:30px;text-align:center;font-size:10.6px;color:#a4a4a4;">30</div>
<div class="t" style="left:292.3px;top:737.2px;width:30px;text-align:center;font-size:10.6px;color:#a4a4a4;">40</div>
<div class="t" style="left:292.3px;top:758.1px;width:30px;text-align:center;font-size:10.6px;color:#a4a4a4;">60</div>
<svg width="40" height="200" style="position:absolute;left:329.5px;top:555px"><g fill="#5a5a5a"><rect x="5.7" y="6.4" width="28.8" height="1.8"/><rect x="5.7" y="42.3" width="28.8" height="1.8"/><rect x="5.7" y="76.8" width="28.8" height="1.8"/><rect x="5.7" y="107.0" width="28.8" height="1.8"/><rect x="5.7" y="125.0" width="28.8" height="1.8"/><rect x="5.7" y="145.7" width="28.8" height="1.8"/><rect x="5.7" y="160.7" width="28.8" height="1.8"/><rect x="5.7" y="175.7" width="28.8" height="1.8"/><rect x="5.7" y="183.0" width="28.8" height="1.8"/><rect x="5.7" y="193.7" width="28.8" height="1.8"/></g><rect x="17.6" y="4.7" width="4.8" height="192" fill="#000"/></svg>
<div class="cap" style="left:338.0px;top:576px"></div>
<div style="position:absolute;left:295.5px;top:779px;width:69px;height:20px;background:#000;"></div>
<div class="t" style="left:280.0px;top:781.7px;width:100px;text-align:center;font-size:17.8px;color:#fff;">0.00</div>
<div class="btn" style="left:381px;top:548.5px;width:40px;height:22px"><div class="t" style="left:0;top:1.6px;width:36px;text-align:center;font-size:16.5px;color:#111;-webkit-text-stroke:0.35px #111;transform:scaleX(0.92)">M</div></div>
<div class="btn" style="left:381px;top:577.5px;width:40px;height:22px"><div class="t" style="left:0;top:1.6px;width:36px;text-align:center;font-size:16.5px;color:#111;-webkit-text-stroke:0.35px #111;transform:scaleX(0.8)">S</div></div>
<div class="t" style="left:350.3px;top:609px;width:100px;text-align:center;font-size:9.5px;color:#a0a0a0;">OVR</div>
<div style="position:absolute;left:381.3px;top:616px;width:7.3px;height:149px;background:#000;"></div>
<div style="position:absolute;left:411.8px;top:616px;width:7.3px;height:149px;background:#000;"></div>
<svg width="40" height="160" style="position:absolute;left:380.3px;top:610px"><g fill="#8e8e8e"><rect x="8.9" y="13.6" width="2.9" height="1.6"/><rect x="28.3" y="13.6" width="3" height="1.6"/><rect x="8.9" y="28.6" width="2.9" height="1.6"/><rect x="28.3" y="28.6" width="3" height="1.6"/><rect x="8.9" y="45.0" width="2.9" height="1.6"/><rect x="28.3" y="45.0" width="3" height="1.6"/><rect x="8.9" y="70.7" width="2.9" height="1.6"/><rect x="28.3" y="70.7" width="3" height="1.6"/><rect x="8.9" y="87.2" width="2.9" height="1.6"/><rect x="28.3" y="87.2" width="3" height="1.6"/><rect x="8.9" y="109.8" width="2.9" height="1.6"/><rect x="28.3" y="109.8" width="3" height="1.6"/><rect x="8.9" y="131.0" width="2.9" height="1.6"/><rect x="28.3" y="131.0" width="3" height="1.6"/><rect x="8.9" y="151.9" width="2.9" height="1.6"/><rect x="28.3" y="151.9" width="3" height="1.6"/></g></svg>
<div class="t" style="left:385.3px;top:620.3000000000001px;width:30px;text-align:center;font-size:10.6px;color:#a4a4a4;">0</div>
<div class="t" style="left:385.3px;top:636.6px;width:30px;text-align:center;font-size:10.6px;color:#a4a4a4;">3</div>
<div class="t" style="left:385.3px;top:653.0px;width:30px;text-align:center;font-size:10.6px;color:#a4a4a4;">6</div>
<div class="t" style="left:385.3px;top:678.2px;width:30px;text-align:center;font-size:10.6px;color:#a4a4a4;">12</div>
<div class="t" style="left:385.3px;top:695.2px;width:30px;text-align:center;font-size:10.6px;color:#a4a4a4;">18</div>
<div class="t" style="left:385.3px;top:716.3000000000001px;width:30px;text-align:center;font-size:10.6px;color:#a4a4a4;">30</div>
<div class="t" style="left:385.3px;top:737.2px;width:30px;text-align:center;font-size:10.6px;color:#a4a4a4;">40</div>
<div class="t" style="left:385.3px;top:758.1px;width:30px;text-align:center;font-size:10.6px;color:#a4a4a4;">60</div>
<svg width="40" height="200" style="position:absolute;left:422.5px;top:555px"><g fill="#5a5a5a"><rect x="5.7" y="6.4" width="28.8" height="1.8"/><rect x="5.7" y="42.3" width="28.8" height="1.8"/><rect x="5.7" y="76.8" width="28.8" height="1.8"/><rect x="5.7" y="107.0" width="28.8" height="1.8"/><rect x="5.7" y="125.0" width="28.8" height="1.8"/><rect x="5.7" y="145.7" width="28.8" height="1.8"/><rect x="5.7" y="160.7" width="28.8" height="1.8"/><rect x="5.7" y="175.7" width="28.8" height="1.8"/><rect x="5.7" y="183.0" width="28.8" height="1.8"/><rect x="5.7" y="193.7" width="28.8" height="1.8"/></g><rect x="17.6" y="4.7" width="4.8" height="192" fill="#000"/></svg>
<div class="cap" style="left:431.0px;top:576px"></div>
<div style="position:absolute;left:388.5px;top:779px;width:69px;height:20px;background:#000;"></div>
<div class="t" style="left:373.0px;top:781.7px;width:100px;text-align:center;font-size:17.8px;color:#fff;">0.00</div>
<div class="btn" style="left:474px;top:548.5px;width:40px;height:22px"><div class="t" style="left:0;top:1.6px;width:36px;text-align:center;font-size:16.5px;color:#111;-webkit-text-stroke:0.35px #111;transform:scaleX(0.92)">M</div></div>
<div class="t" style="left:443.0px;top:609px;width:100px;text-align:center;font-size:9.5px;color:#a0a0a0;">OVR</div>
<div style="position:absolute;left:474px;top:616px;width:7.3px;height:149px;background:#000;"></div>
<div style="position:absolute;left:504.5px;top:616px;width:7.3px;height:149px;background:#000;"></div>
<svg width="40" height="160" style="position:absolute;left:473px;top:610px"><g fill="#8e8e8e"><rect x="8.9" y="13.6" width="2.9" height="1.6"/><rect x="28.3" y="13.6" width="3" height="1.6"/><rect x="8.9" y="28.6" width="2.9" height="1.6"/><rect x="28.3" y="28.6" width="3" height="1.6"/><rect x="8.9" y="45.0" width="2.9" height="1.6"/><rect x="28.3" y="45.0" width="3" height="1.6"/><rect x="8.9" y="70.7" width="2.9" height="1.6"/><rect x="28.3" y="70.7" width="3" height="1.6"/><rect x="8.9" y="87.2" width="2.9" height="1.6"/><rect x="28.3" y="87.2" width="3" height="1.6"/><rect x="8.9" y="109.8" width="2.9" height="1.6"/><rect x="28.3" y="109.8" width="3" height="1.6"/><rect x="8.9" y="131.0" width="2.9" height="1.6"/><rect x="28.3" y="131.0" width="3" height="1.6"/><rect x="8.9" y="151.9" width="2.9" height="1.6"/><rect x="28.3" y="151.9" width="3" height="1.6"/></g></svg>
<div class="t" style="left:478.0px;top:620.3000000000001px;width:30px;text-align:center;font-size:10.6px;color:#a4a4a4;">0</div>
<div class="t" style="left:478.0px;top:636.6px;width:30px;text-align:center;font-size:10.6px;color:#a4a4a4;">3</div>
<div class="t" style="left:478.0px;top:653.0px;width:30px;text-align:center;font-size:10.6px;color:#a4a4a4;">6</div>
<div class="t" style="left:478.0px;top:678.2px;width:30px;text-align:center;font-size:10.6px;color:#a4a4a4;">12</div>
<div class="t" style="left:478.0px;top:695.2px;width:30px;text-align:center;font-size:10.6px;color:#a4a4a4;">18</div>
<div class="t" style="left:478.0px;top:716.3000000000001px;width:30px;text-align:center;font-size:10.6px;color:#a4a4a4;">30</div>
<div class="t" style="left:478.0px;top:737.2px;width:30px;text-align:center;font-size:10.6px;color:#a4a4a4;">40</div>
<div class="t" style="left:478.0px;top:758.1px;width:30px;text-align:center;font-size:10.6px;color:#a4a4a4;">60</div>
<svg width="40" height="200" style="position:absolute;left:515.8px;top:555px"><g fill="#5a5a5a"><rect x="5.7" y="6.4" width="28.8" height="1.8"/><rect x="5.7" y="42.3" width="28.8" height="1.8"/><rect x="5.7" y="76.8" width="28.8" height="1.8"/><rect x="5.7" y="107.0" width="28.8" height="1.8"/><rect x="5.7" y="125.0" width="28.8" height="1.8"/><rect x="5.7" y="145.7" width="28.8" height="1.8"/><rect x="5.7" y="160.7" width="28.8" height="1.8"/><rect x="5.7" y="175.7" width="28.8" height="1.8"/><rect x="5.7" y="183.0" width="28.8" height="1.8"/><rect x="5.7" y="193.7" width="28.8" height="1.8"/></g><rect x="17.6" y="4.7" width="4.8" height="192" fill="#000"/></svg>
<div class="cap" style="left:524.3px;top:576px"></div>
<div style="position:absolute;left:481.5px;top:779px;width:69px;height:20px;background:#000;"></div>
<div class="t" style="left:466.0px;top:781.7px;width:100px;text-align:center;font-size:17.8px;color:#fff;">0.00</div>
<div class="t" style="left:563.1px;top:609px;width:100px;text-align:center;font-size:9.5px;color:#a0a0a0;">OVR</div>
<div style="position:absolute;left:594.1px;top:616px;width:7.3px;height:149px;background:#000;"></div>
<div style="position:absolute;left:624.6px;top:616px;width:7.3px;height:149px;background:#000;"></div>
<svg width="40" height="160" style="position:absolute;left:593.1px;top:610px"><g fill="#8e8e8e"><rect x="8.9" y="13.6" width="2.9" height="1.6"/><rect x="28.3" y="13.6" width="3" height="1.6"/><rect x="8.9" y="28.6" width="2.9" height="1.6"/><rect x="28.3" y="28.6" width="3" height="1.6"/><rect x="8.9" y="45.0" width="2.9" height="1.6"/><rect x="28.3" y="45.0" width="3" height="1.6"/><rect x="8.9" y="70.7" width="2.9" height="1.6"/><rect x="28.3" y="70.7" width="3" height="1.6"/><rect x="8.9" y="87.2" width="2.9" height="1.6"/><rect x="28.3" y="87.2" width="3" height="1.6"/><rect x="8.9" y="109.8" width="2.9" height="1.6"/><rect x="28.3" y="109.8" width="3" height="1.6"/><rect x="8.9" y="131.0" width="2.9" height="1.6"/><rect x="28.3" y="131.0" width="3" height="1.6"/><rect x="8.9" y="151.9" width="2.9" height="1.6"/><rect x="28.3" y="151.9" width="3" height="1.6"/></g></svg>
<div class="t" style="left:598.1px;top:620.3000000000001px;width:30px;text-align:center;font-size:10.6px;color:#a4a4a4;">0</div>
<div class="t" style="left:598.1px;top:636.6px;width:30px;text-align:center;font-size:10.6px;color:#a4a4a4;">3</div>
<div class="t" style="left:598.1px;top:653.0px;width:30px;text-align:center;font-size:10.6px;color:#a4a4a4;">6</div>
<div class="t" style="left:598.1px;top:678.2px;width:30px;text-align:center;font-size:10.6px;color:#a4a4a4;">12</div>
<div class="t" style="left:598.1px;top:695.2px;width:30px;text-align:center;font-size:10.6px;color:#a4a4a4;">18</div>
<div class="t" style="left:598.1px;top:716.3000000000001px;width:30px;text-align:center;font-size:10.6px;color:#a4a4a4;">30</div>
<div class="t" style="left:598.1px;top:737.2px;width:30px;text-align:center;font-size:10.6px;color:#a4a4a4;">40</div>
<div class="t" style="left:598.1px;top:758.1px;width:30px;text-align:center;font-size:10.6px;color:#a4a4a4;">60</div>
<div style="position:absolute;left:595.4px;top:654px;width:4.9px;height:3px;background:#f2d841;"></div>
<div style="position:absolute;left:595.4px;top:677.8px;width:4.9px;height:19.800000000000068px;background:#f2d841;"></div>
<div style="position:absolute;left:595.4px;top:697.6px;width:4.9px;height:66.39999999999998px;background:#3ec86e;"></div>
<div style="position:absolute;left:625.9px;top:654px;width:4.9px;height:3px;background:#f2d841;"></div>
<div style="position:absolute;left:625.9px;top:677.8px;width:4.9px;height:19.800000000000068px;background:#f2d841;"></div>
<div style="position:absolute;left:625.9px;top:697.6px;width:4.9px;height:66.39999999999998px;background:#3ec86e;"></div>
<div class="t" style="left:-0.25px;top:814px;width:100px;text-align:center;font-size:17.2px;color:#f0f0f0;transform:scaleX(1.0)">Input 1</div>
<div class="t" style="left:93.35px;top:814px;width:100px;text-align:center;font-size:17.2px;color:#f0f0f0;transform:scaleX(1.0)">Input 2</div>
<div class="t" style="left:186.5px;top:814px;width:100px;text-align:center;font-size:17.2px;color:#f0f0f0;transform:scaleX(0.9)">DAW</div>
<div class="t" style="left:279.45px;top:814px;width:100px;text-align:center;font-size:17.2px;color:#f0f0f0;transform:scaleX(0.92)">Music</div>
<div class="t" style="left:372.25px;top:814px;width:100px;text-align:center;font-size:17.2px;color:#f0f0f0;transform:scaleX(0.92)">Voice</div>
<div class="t" style="left:464.9px;top:814px;width:100px;text-align:center;font-size:17.2px;color:#f0f0f0;transform:scaleX(0.91)">REV-X</div>
<div class="t" style="left:561.25px;top:814px;width:100px;text-align:center;font-size:17.2px;color:#f0f0f0;transform:scaleX(0.97)">Main</div>
</body></html>
